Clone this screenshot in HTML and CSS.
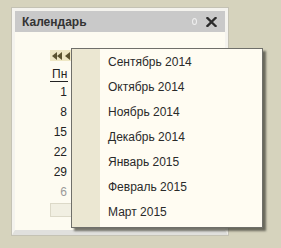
FILE: index.html
```html
<!DOCTYPE html>
<html lang="ru">
<head>
<meta charset="utf-8">
<link rel="stylesheet" href="styles.css">
</head>
<body>
<div class="window">
  <div class="titlebar">
    <span class="title">Календарь</span>
    <span class="pin"></span>
    <svg class="close" width="11" height="10" viewBox="0 0 11 10"><path d="M1.5 1 L9.5 9 M9.5 1 L1.5 9" stroke="#2b2b2b" stroke-width="2.3" stroke-linecap="square"/></svg>
  </div>
  <div class="body">
    <div class="cal">
      <div class="nav">
        <svg width="22" height="10" viewBox="0 0 22 10"><path d="M1 5 L6 1 L6 9 Z M6 5 L11 1 L11 9 Z M14 5 L19 1 L19 9 Z" fill="#5b5330"/></svg>
      </div>
      <div class="dow">Пн</div>
      <div class="day">1</div>
      <div class="day">8</div>
      <div class="day">15</div>
      <div class="day">22</div>
      <div class="day">29</div>
      <div class="day other">6</div>
      <div class="today"></div>
    </div>
  </div>
</div>
<div class="menu">
  <div class="menu-side"></div>
  <ul class="menu-list">
    <li>Сентябрь 2014</li>
    <li>Октябрь 2014</li>
    <li>Ноябрь 2014</li>
    <li>Декабрь 2014</li>
    <li>Январь 2015</li>
    <li>Февраль 2015</li>
    <li>Март 2015</li>
  </ul>
</div>
</body>
</html>
```

FILE: styles.css
```css
html, body {
  margin: 0;
  padding: 0;
}
body {
  width: 281px;
  height: 248px;
  background: #d6d3bd;
  font-family: "Liberation Sans", Arial, sans-serif;
  position: relative;
  overflow: hidden;
}
.window {
  margin: 8px 0 0 12px;
  width: 216px;
  height: 227px;
  box-sizing: border-box;
  border: 3px solid #f4f3ee;
  border-bottom: 5px solid #e0e0dd;
  box-shadow: 0 0 0 1px #c4c2b4;
  background: #fdfbf1;
  display: flex;
  flex-direction: column;
}
.titlebar {
  height: 21px;
  flex: none;
  background: #c9c9c9;
  display: flex;
  align-items: center;
  padding: 0 8px 0 7px;
  font-weight: bold;
  font-size: 12px;
  color: #333;
}
.title {
  flex: 1;
}
.pin {
  width: 3px;
  height: 5px;
  border: 1px solid #efefef;
  border-radius: 50%;
  margin-right: 9px;
}
.close {
  display: block;
}
.body {
  flex: 1;
  padding: 18px 0 0 35px;
}
.cal {
  width: 18px;
  display: flex;
  flex-direction: column;
  align-items: flex-end;
  font-size: 12px;
  color: #222;
}
.nav {
  align-self: flex-start;
  width: 24px;
  height: 11px;
  background: #eee7c4;
  display: flex;
  align-items: center;
  padding-left: 1px;
}
.nav svg {
  display: block;
}
.dow {
  align-self: flex-start;
  margin-top: 6px;
  padding-left: 2px;
  width: 16px;
  line-height: 14px;
  border-bottom: 1px solid #222;
}
.day {
  height: 20px;
  line-height: 20px;
  padding-right: 1px;
}
.day.other {
  color: #9a9a9a;
}
.today {
  align-self: flex-start;
  margin-top: 1px;
  width: 22px;
  height: 14px;
  box-sizing: border-box;
  border: 1px solid #dcd9c8;
  background: #f1efe2;
}
.menu {
  position: absolute;
  left: 71px;
  top: 48px;
  width: 192px;
  height: 180px;
  box-sizing: border-box;
  border: 1px solid #6f6f6a;
  background: #fffcf2;
  box-shadow: 3px 3px 2px rgba(70, 70, 60, 0.75);
  display: flex;
}
.menu-side {
  width: 28px;
  background: #ebe7d2;
  flex: none;
}
.menu-list {
  list-style: none;
  margin: 0;
  padding: 1px 0 0 8px;
  font-size: 12px;
  color: #2a2a2a;
}
.menu-list li {
  height: 25px;
  line-height: 25px;
}
```
